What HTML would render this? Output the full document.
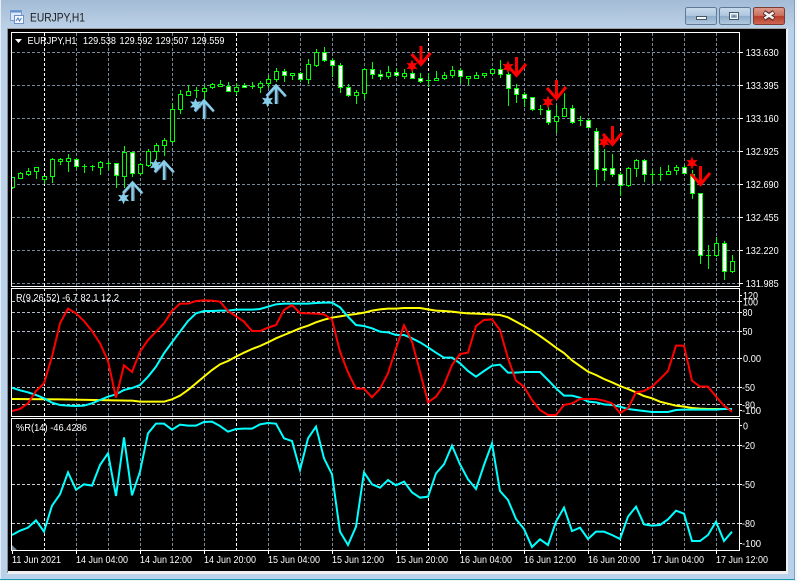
<!DOCTYPE html>
<html lang="en"><head><meta charset="utf-8"><title>EURJPY,H1</title>
<style>
html,body{margin:0;padding:0;width:797px;height:581px;overflow:hidden;background:#b9d1ea}
svg{display:block}
text{font-family:"Liberation Sans",sans-serif;font-size:10.5px;fill:#fff}
.t{font-size:12px;fill:#1c1c1c}
.l{fill:none;stroke-width:2;vector-effect:non-scaling-stroke;stroke-linejoin:miter}
</style></head><body>
<svg width="797" height="581" viewBox="0 0 797 581" xmlns="http://www.w3.org/2000/svg">
<defs>
<linearGradient id="tb" x1="0" y1="0" x2="0" y2="1"><stop offset="0" stop-color="#a3bbd5"/><stop offset="1" stop-color="#bcd2e8"/></linearGradient>
<linearGradient id="bt" x1="0" y1="0" x2="0" y2="1"><stop offset="0" stop-color="#c9dbec"/><stop offset=".48" stop-color="#aec6de"/><stop offset=".52" stop-color="#8dabc9"/><stop offset="1" stop-color="#b5cde3"/></linearGradient>
<linearGradient id="cl" x1="0" y1="0" x2="0" y2="1"><stop offset="0" stop-color="#dc9c8e"/><stop offset=".48" stop-color="#cc6f5d"/><stop offset=".52" stop-color="#b73c27"/><stop offset="1" stop-color="#cf6a55"/></linearGradient>
<clipPath id="c1"><rect x="12" y="33" width="727" height="253"/></clipPath>
<clipPath id="c2"><rect x="12" y="289" width="727" height="127"/></clipPath>
<clipPath id="c3"><rect x="12" y="419" width="727" height="131"/></clipPath>
</defs>
<!-- frame -->
<rect width="797" height="581" fill="#b9d1ea"/>
<rect width="797" height="29" fill="url(#tb)"/>
<rect x="0" y="0" width="1" height="581" fill="#e4edf5"/>
<rect x="795" y="0" width="2" height="581" fill="#f2f6fa"/>
<rect x="794" y="0" width="1" height="581" fill="#7fa0b8"/>
<rect x="0" y="579" width="795" height="1" fill="#1b9fb0"/>
<rect x="0" y="580" width="797" height="1" fill="#eef3f8"/>
<rect x="7" y="28" width="781" height="546" fill="#f0f0f0"/>
<rect x="7" y="28" width="780" height="1" fill="#a0a0a0"/>
<rect x="7" y="29" width="1" height="544" fill="#8a8a8a"/>
<rect x="8" y="29" width="778" height="542" fill="#000"/>
<!-- icon -->
<rect x="10.5" y="10.5" width="11" height="10" fill="#dbe8f8" stroke="#7f9fd0"/>
<rect x="10.5" y="10.5" width="11" height="2" fill="#5f8fd0"/>
<rect x="14.5" y="15.5" width="9" height="8" fill="#f4f8ff" stroke="#6f8fc8"/>
<path d="M16 21l2-3 1.500 3 2-3" fill="none" stroke="#4d78c0"/>
<text class="t" x="30" y="21.500" textLength="55" lengthAdjust="spacingAndGlyphs">EURJPY,H1</text>
<!-- buttons -->
<rect x="685.500" y="7.500" width="31" height="17" rx="2" fill="url(#bt)" stroke="#5f7a96"/>
<rect x="696.500" y="16.500" width="10" height="3" fill="#f4f6f8" stroke="#44586c"/>
<rect x="719.500" y="7.500" width="31" height="17" rx="2" fill="url(#bt)" stroke="#5f7a96"/>
<rect x="729.500" y="12.500" width="9" height="7" fill="none" stroke="#44586c"/>
<rect x="730.500" y="13.500" width="7" height="5" fill="none" stroke="#f4f6f8"/>
<rect x="732.500" y="15.500" width="3" height="1" fill="#44586c"/>
<rect x="753.500" y="7.500" width="31" height="17" rx="2" fill="url(#cl)" stroke="#7e3b34"/>
<path d="M764 12l10 7M774 12l-10 7" stroke="#5a2a26" stroke-width="4.500"/>
<path d="M764.500 12.500l9 6M773.500 12.500l-9 6" stroke="#f3f3f3" stroke-width="2.500"/>

<!-- grid slate -->
<g fill="none" stroke="#778899" stroke-dasharray="3 2">
<path d="M76.500 33V550M108.500 33V550M140.500 33V550M172.500 33V550M204.500 33V550M268.500 33V550M300.500 33V550M332.500 33V550M364.500 33V550M396.500 33V550M460.500 33V550M492.500 33V550M524.500 33V550M556.500 33V550M588.500 33V550M652.500 33V550M684.500 33V550M716.500 33V550"/>
<path d="M12 52.500H739M12 85.500H739M12 118.500H739M12 151.500H739M12 184.500H739M12 217.500H739M12 250.500H739M12 283.500H739"/>
</g>
<g fill="none" stroke="#b0bac4" stroke-dasharray="3 2">
<path d="M12 301.500H739M12 312.500H739M12 331.500H739M12 358.500H739M12 387.500H739M12 404.500H739"/>
</g>
<g fill="none" stroke="#c8d0d8" stroke-dasharray="3 2">
<path d="M12 445.500H739M12 484.500H739M12 523.500H739"/>
</g>
<path d="M44.500 33V550M236.500 33V550M428.500 33V550M620.500 33V550" fill="none" stroke="#fff" stroke-dasharray="3 2"/>

<!-- panes -->
<rect x="11.500" y="32.500" width="728" height="254" fill="none" stroke="#fff"/>
<rect x="11.500" y="288.500" width="728" height="128" fill="none" stroke="#fff"/>
<rect x="11.500" y="418.500" width="728" height="132" fill="none" stroke="#fff"/>

<!-- candles -->
<g clip-path="url(#c1)">
<path fill="none" stroke="#0f0" d="M12.500 177V189M20.500 172V179M28.500 168V176M36.500 167V179M44.500 176V184M52.500 158V183M60.500 158V165M68.500 154V172M76.500 158V169M84.500 164V173M82 166.500h5M92.500 165V171M90 166.500h5M100.500 161V175M108.500 161V170M106 163.500h5M116.500 163V188M124.500 146V188M132.500 152V177M140.500 163V175M148.500 149V167M156.500 143V160M164.500 138V156M172.500 103V143M180.500 90V114M188.500 85V96M196.500 87V98M194 90.500h5M204.500 85V100M212.500 83V89M220.500 80V87M228.500 82V92M236.500 83V95M244.500 83V88M252.500 82V89M250 86.500h5M260.500 81V93M268.500 75V88M276.500 68V82M284.500 69V82M292.500 73V80M300.500 72V82M308.500 59V84M316.500 49V67M324.500 47V62M332.500 58V77M340.500 63V93M348.500 84V97M356.500 90V104M364.500 68V99M372.500 62V79M380.500 70V80M388.500 66V79M396.500 68V77M404.500 69V79M412.500 71V79M420.500 73V83M428.500 73V87M426 80.500h5M436.500 71V81M444.500 72V80M452.500 66V78M460.500 68V83M468.500 76V85M476.500 72V79M484.500 73V78M492.500 68V75M500.500 60V78M508.500 72V106M516.500 84V103M524.500 92V107M532.500 97V111M540.500 105V115M538 109.500h5M548.500 107V125M556.500 105V133M564.500 93V117M572.500 105V124M580.500 116V126M578 120.500h5M588.500 119V127M596.500 128V187M604.500 149V181M612.500 154V177M620.500 172V196M628.500 167V187M636.500 159V177M644.500 159V182M652.500 170V184M650 174.500h5M660.500 167V181M658 174.500h5M668.500 165V175M676.500 165V175M684.500 165V174M692.500 170V199M700.500 193V264M708.500 245V269M706 255.500h5M716.500 237V257M724.500 241V280M732.500 255V273"/>
<path fill="#000" stroke="#0f0" d="M10.500 177.500h4v10h-4zM18.500 173.500h4v5h-4zM26.500 171.500h4v3h-4zM34.500 167.500h4v4h-4zM42.500 176.500h4v3h-4zM50.500 159.500h4v17h-4zM58.500 159.500h4v2h-4zM66.500 158.500h4v3h-4zM98.500 162.500h4v5h-4zM122.500 152.500h4v24h-4zM138.500 164.500h4v9h-4zM146.500 151.500h4v14h-4zM154.500 145.500h4v6h-4zM162.500 140.500h4v5h-4zM170.500 109.500h4v32h-4zM178.500 94.500h4v15h-4zM186.500 91.500h4v4h-4zM202.500 88.500h4v3h-4zM210.500 84.500h4v3h-4zM218.500 84.500h4v2h-4zM234.500 87.500h4v4h-4zM258.500 83.500h4v4h-4zM266.500 79.500h4v4h-4zM274.500 71.500h4v8h-4zM290.500 73.500h4v2h-4zM306.500 64.500h4v15h-4zM314.500 52.500h4v13h-4zM354.500 92.500h4v3h-4zM362.500 69.500h4v24h-4zM386.500 72.500h4v4h-4zM402.500 73.500h4v3h-4zM434.500 78.500h4v2h-4zM442.500 75.500h4v3h-4zM450.500 70.500h4v5h-4zM466.500 76.500h4v2h-4zM474.500 75.500h4v3h-4zM482.500 73.500h4v2h-4zM490.500 69.500h4v4h-4zM554.500 116.500h4v5h-4zM562.500 108.500h4v8h-4zM626.500 168.500h4v17h-4zM634.500 160.500h4v8h-4zM666.500 171.500h4v3h-4zM674.500 167.500h4v3h-4zM714.500 243.500h4v12h-4zM730.500 261.500h4v10h-4z"/>
<path fill="#fff" stroke="#0f0" d="M74.500 159.500h4v7h-4zM114.500 163.500h4v12h-4zM130.500 152.500h4v21h-4zM226.500 86.500h4v5h-4zM242.500 85.500h4v2h-4zM282.500 71.500h4v4h-4zM298.500 73.500h4v6h-4zM322.500 52.500h4v8h-4zM330.500 60.500h4v5h-4zM338.500 65.500h4v22h-4zM346.500 87.500h4v8h-4zM370.500 69.500h4v5h-4zM378.500 74.500h4v2h-4zM394.500 72.500h4v3h-4zM410.500 73.500h4v5h-4zM418.500 78.500h4v3h-4zM458.500 70.500h4v6h-4zM498.500 69.500h4v5h-4zM506.500 74.500h4v14h-4zM514.500 88.500h4v6h-4zM522.500 94.500h4v4h-4zM530.500 97.500h4v12h-4zM546.500 110.500h4v12h-4zM570.500 108.500h4v14h-4zM586.500 120.500h4v7h-4zM594.500 131.500h4v38h-4zM602.500 168.500h4v2h-4zM610.500 168.500h4v6h-4zM618.500 174.500h4v11h-4zM642.500 160.500h4v14h-4zM682.500 167.500h4v6h-4zM690.500 174.500h4v19h-4zM698.500 193.500h4v62h-4zM722.500 243.500h4v28h-4z"/>
</g>

<!-- blue arrows and stars -->
<g>
<g transform="translate(132.500 180)"><path d="M1.500 5V21" stroke="#4a5f78" stroke-width="2" fill="none"/><path d="M-9.500 13L0 2.500L9.500 13" stroke="#5a7088" stroke-width="2.500" fill="none" transform="translate(.6 .6)"/><path d="M0 3V21M-9.500 13L0 2.500L9.500 13" stroke="#87ceeb" stroke-width="2.500" fill="none"/></g>
<g transform="translate(164 159)"><path d="M1.500 5V21" stroke="#4a5f78" stroke-width="2" fill="none"/><path d="M-9.500 13L0 2.500L9.500 13" stroke="#5a7088" stroke-width="2.500" fill="none" transform="translate(.6 .6)"/><path d="M0 3V21M-9.500 13L0 2.500L9.500 13" stroke="#87ceeb" stroke-width="2.500" fill="none"/></g>
<g transform="translate(204 98)"><path d="M1.500 5V21" stroke="#4a5f78" stroke-width="2" fill="none"/><path d="M-9.500 13L0 2.500L9.500 13" stroke="#5a7088" stroke-width="2.500" fill="none" transform="translate(.6 .6)"/><path d="M0 3V21M-9.500 13L0 2.500L9.500 13" stroke="#87ceeb" stroke-width="2.500" fill="none"/></g>
<g transform="translate(276 83)"><path d="M1.500 5V21" stroke="#4a5f78" stroke-width="2" fill="none"/><path d="M-9.500 13L0 2.500L9.500 13" stroke="#5a7088" stroke-width="2.500" fill="none" transform="translate(.6 .6)"/><path d="M0 3V21M-9.500 13L0 2.500L9.500 13" stroke="#87ceeb" stroke-width="2.500" fill="none"/></g>
<g fill="#87ceeb">
<polygon transform="translate(123.500 198)" points="0,-6.500 1.500,-2.600 5.600,-3.250 3,0 5.600,3.250 1.500,2.600 0,6.500 -1.500,2.600 -5.600,3.250 -3,0 -5.600,-3.250 -1.500,-2.600"/>
<polygon transform="translate(155.500 165)" points="0,-6.500 1.500,-2.600 5.600,-3.250 3,0 5.600,3.250 1.500,2.600 0,6.500 -1.500,2.600 -5.600,3.250 -3,0 -5.600,-3.250 -1.500,-2.600"/>
<polygon transform="translate(195.500 104.500)" points="0,-6.500 1.500,-2.600 5.600,-3.250 3,0 5.600,3.250 1.500,2.600 0,6.500 -1.500,2.600 -5.600,3.250 -3,0 -5.600,-3.250 -1.500,-2.600"/>
<polygon transform="translate(267.500 101)" points="0,-6.500 1.500,-2.600 5.600,-3.250 3,0 5.600,3.250 1.500,2.600 0,6.500 -1.500,2.600 -5.600,3.250 -3,0 -5.600,-3.250 -1.500,-2.600"/>
</g>
</g>
<!-- red arrows and stars -->
<g stroke="#f00" stroke-width="3" fill="none">
<path transform="translate(421 67)" d="M0 -21V-2M-9.500 -13L0 -2.500L9.500 -14"/>
<path transform="translate(516.500 78)" d="M0 -21V-2M-9.500 -13L0 -2.500L9.500 -14"/>
<path transform="translate(556.500 101)" d="M0 -21V-2M-9.500 -13L0 -2.500L9.500 -14"/>
<path transform="translate(612.500 147)" d="M0 -21V-2M-9.500 -13L0 -2.500L9.500 -14"/>
<path transform="translate(700.500 187)" d="M0 -21V-2M-9.500 -13L0 -2.500L9.500 -14"/>
</g>
<g fill="#f00">
<polygon transform="translate(412 66)" points="0,-6.500 1.500,-2.600 5.600,-3.250 3,0 5.600,3.250 1.500,2.600 0,6.500 -1.500,2.600 -5.600,3.250 -3,0 -5.600,-3.250 -1.500,-2.600"/>
<polygon transform="translate(508 67)" points="0,-6.500 1.500,-2.600 5.600,-3.250 3,0 5.600,3.250 1.500,2.600 0,6.500 -1.500,2.600 -5.600,3.250 -3,0 -5.600,-3.250 -1.500,-2.600"/>
<polygon transform="translate(548 102)" points="0,-6.500 1.500,-2.600 5.600,-3.250 3,0 5.600,3.250 1.500,2.600 0,6.500 -1.500,2.600 -5.600,3.250 -3,0 -5.600,-3.250 -1.500,-2.600"/>
<polygon transform="translate(604 142)" points="0,-6.500 1.500,-2.600 5.600,-3.250 3,0 5.600,3.250 1.500,2.600 0,6.500 -1.500,2.600 -5.600,3.250 -3,0 -5.600,-3.250 -1.500,-2.600"/>
<polygon transform="translate(692 163)" points="0,-6.500 1.500,-2.600 5.600,-3.250 3,0 5.600,3.250 1.500,2.600 0,6.500 -1.500,2.600 -5.600,3.250 -3,0 -5.600,-3.250 -1.500,-2.600"/>
</g>

<!-- pane 2 lines -->
<g clip-path="url(#c2)"><g transform="translate(0 285) scale(1 .33333)">
<polyline class="l" stroke="#ff0" points="12,342 60,343 132,347 140,350 164,350 172,343 180,332 188,315 196,295 204,275 212,255 220,238 228,228 236,215 244,203 252,192 260,183 268,172 276,160 284,150 292,140 300,130 308,122 316,112 324,104 332,98 340,94 348,90 356,87 364,83 372,77 380,73 388,71 396,71 404,69 412,69 420,69 428,73 436,77 444,78 452,80 460,83 468,85 476,86 484,87 492,88 500,90 508,97 516,110 524,123 532,137 540,153 548,170 556,188 564,204 572,226 580,243 588,260 596,270 604,282 612,292 620,303 628,312 636,322 644,333 652,340 660,350 668,356 676,362 684,365 692,369 700,371 708,372 716,372 724,372 732,372"/>
<polyline class="l" stroke="#0ff" points="12,308 20,316 28,322 36,330 44,340 52,353 60,360 68,362 76,363 84,362 92,355 100,345 108,335 116,328 124,315 132,309 140,300 148,275 156,245 164,205 172,172 180,140 188,108 196,85 204,78 212,78 220,77 228,77 236,74 244,74 252,74 260,72 268,65 276,58 284,56 292,56 300,56 308,56 316,54 324,53 332,53 340,67 348,95 356,120 364,123 372,130 380,140 388,142 396,150 404,150 412,160 420,172 428,187 436,203 444,218 452,218 460,235 468,258 476,275 484,258 492,242 500,239 508,263 516,263 524,261 532,261 540,261 548,285 556,310 564,332 572,332 580,338 588,350 596,352 604,358 612,360 620,365 628,372 636,375 644,378 652,381 660,381 668,381 676,375 684,374 692,374 700,374 708,374 716,374 724,372 732,372"/>
<polyline class="l" stroke="#f00" points="12,378 20,372 28,355 36,318 44,295 52,215 60,115 68,71 76,85 84,108 92,138 100,175 108,228 116,338 124,241 132,261 140,200 148,165 156,140 164,115 172,78 180,56 188,56 196,48 204,46 212,47 220,50 228,78 236,94 244,110 252,138 260,138 268,128 276,120 284,75 292,60 300,84 308,85 316,86 324,88 332,104 340,200 348,262 356,311 364,311 372,337 380,311 388,265 396,190 404,121 412,170 420,260 428,352 436,335 444,300 452,240 460,207 468,203 476,123 484,105 492,103 500,135 508,220 516,287 524,305 532,345 540,375 548,390 556,390 564,360 572,355 580,342 588,342 596,342 604,347 612,355 620,384 628,370 636,322 644,318 652,305 660,282 668,258 676,182 684,182 692,287 700,305 708,305 716,335 724,362 732,380"/>
</g></g>
<!-- pane 3 line -->
<g clip-path="url(#c3)"><g transform="translate(0 415) scale(1 .33333)">
<polyline class="l" stroke="#0ff" points="12,360 20,347 28,338 36,316 44,350 52,272 60,238 68,172 76,224 84,208 92,212 100,150 108,115 116,243 124,67 132,241 140,170 148,55 156,26 164,26 172,44 180,29 188,32 196,32 204,21 212,20 220,33 228,50 236,42 244,41 252,41 260,28 268,24 276,26 284,70 292,78 300,165 308,70 316,35 324,130 332,178 340,350 348,390 356,335 364,172 372,208 380,218 388,195 396,211 404,200 412,232 420,248 428,245 436,175 444,148 452,92 460,148 468,193 476,222 484,150 492,85 500,228 508,255 516,312 524,342 532,396 540,373 548,390 556,320 564,278 572,348 580,338 588,372 596,350 604,350 612,360 620,372 628,305 636,275 644,328 652,332 660,330 668,313 676,287 684,296 692,378 700,378 708,360 716,320 724,378 732,350"/>
</g></g>
<polygon points="12,545 12,550 17,550" fill="#778899"/>

<!-- ticks -->
<path fill="none" stroke="#fff" d="M740 52.500h3M740 85.500h3M740 118.500h3M740 151.500h3M740 184.500h3M740 217.500h3M740 250.500h3M740 283.500h3M740 295.500h2M740 301.500h2M740 312.500h2M740 331.500h2M740 358.500h2M740 387.500h2M740 404.500h2M740 410.500h2M740 425.500h2M740 445.500h2M740 484.500h2M740 523.500h2M740 543.500h2M12.500 551v3M76.500 551v3M140.500 551v3M204.500 551v3M268.500 551v3M332.500 551v3M396.500 551v3M460.500 551v3M524.500 551v3M588.500 551v3M652.500 551v3M716.500 551v3"/>

<!-- header -->
<polygon points="15,39 22,39 18.500,43" fill="#fff"/>
<text x="27.500" y="44" textLength="49" lengthAdjust="spacingAndGlyphs">EURJPY,H1</text>
<text x="83" y="44" textLength="33" lengthAdjust="spacingAndGlyphs">129.538</text>
<text x="119.500" y="44" textLength="33" lengthAdjust="spacingAndGlyphs">129.592</text>
<text x="155.500" y="44" textLength="33" lengthAdjust="spacingAndGlyphs">129.507</text>
<text x="191.500" y="44" textLength="33" lengthAdjust="spacingAndGlyphs">129.559</text>
<text x="16" y="301" textLength="103" lengthAdjust="spacingAndGlyphs">R(9,26,52) -6.7 82.1 12.2</text>
<text x="16" y="431" textLength="71" lengthAdjust="spacingAndGlyphs">%R(14) -46.4286</text>

<!-- price labels -->
<text x="745.700" y="56" textLength="33" lengthAdjust="spacingAndGlyphs">133.630</text>
<text x="745.700" y="89" textLength="33" lengthAdjust="spacingAndGlyphs">133.395</text>
<text x="745.700" y="122" textLength="33" lengthAdjust="spacingAndGlyphs">133.160</text>
<text x="745.700" y="155" textLength="33" lengthAdjust="spacingAndGlyphs">132.925</text>
<text x="745.700" y="188" textLength="33" lengthAdjust="spacingAndGlyphs">132.690</text>
<text x="745.700" y="221" textLength="33" lengthAdjust="spacingAndGlyphs">132.455</text>
<text x="745.700" y="254" textLength="33" lengthAdjust="spacingAndGlyphs">132.220</text>
<text x="745.700" y="287" textLength="33" lengthAdjust="spacingAndGlyphs">131.985</text>
<text x="743" y="299" textLength="15" lengthAdjust="spacingAndGlyphs">120</text>
<text x="743" y="305.500" textLength="15" lengthAdjust="spacingAndGlyphs">100</text>
<text x="742.500" y="316" textLength="10" lengthAdjust="spacingAndGlyphs">80</text>
<text x="742.500" y="335" textLength="10" lengthAdjust="spacingAndGlyphs">50</text>
<text x="743" y="362" textLength="18" lengthAdjust="spacingAndGlyphs">0.00</text>
<text x="742" y="391" textLength="13" lengthAdjust="spacingAndGlyphs">-50</text>
<text x="742" y="408.500" textLength="13" lengthAdjust="spacingAndGlyphs">-80</text>
<text x="742" y="414" textLength="19" lengthAdjust="spacingAndGlyphs">-100</text>
<text x="743" y="429.500" textLength="5" lengthAdjust="spacingAndGlyphs">0</text>
<text x="742" y="449" textLength="13" lengthAdjust="spacingAndGlyphs">-20</text>
<text x="742" y="488" textLength="13" lengthAdjust="spacingAndGlyphs">-50</text>
<text x="742" y="527" textLength="13" lengthAdjust="spacingAndGlyphs">-80</text>
<text x="742" y="547" textLength="19" lengthAdjust="spacingAndGlyphs">-100</text>

<!-- time labels -->
<text x="12" y="563" textLength="49" lengthAdjust="spacingAndGlyphs">11 Jun 2021</text>
<text x="76" y="563" textLength="52" lengthAdjust="spacingAndGlyphs">14 Jun 04:00</text>
<text x="140" y="563" textLength="52" lengthAdjust="spacingAndGlyphs">14 Jun 12:00</text>
<text x="204" y="563" textLength="52" lengthAdjust="spacingAndGlyphs">14 Jun 20:00</text>
<text x="268" y="563" textLength="52" lengthAdjust="spacingAndGlyphs">15 Jun 04:00</text>
<text x="332" y="563" textLength="52" lengthAdjust="spacingAndGlyphs">15 Jun 12:00</text>
<text x="396" y="563" textLength="52" lengthAdjust="spacingAndGlyphs">15 Jun 20:00</text>
<text x="460" y="563" textLength="52" lengthAdjust="spacingAndGlyphs">16 Jun 04:00</text>
<text x="524" y="563" textLength="52" lengthAdjust="spacingAndGlyphs">16 Jun 12:00</text>
<text x="588" y="563" textLength="52" lengthAdjust="spacingAndGlyphs">16 Jun 20:00</text>
<text x="652" y="563" textLength="52" lengthAdjust="spacingAndGlyphs">17 Jun 04:00</text>
<text x="716" y="563" textLength="52" lengthAdjust="spacingAndGlyphs">17 Jun 12:00</text>
</svg>
</body></html>
